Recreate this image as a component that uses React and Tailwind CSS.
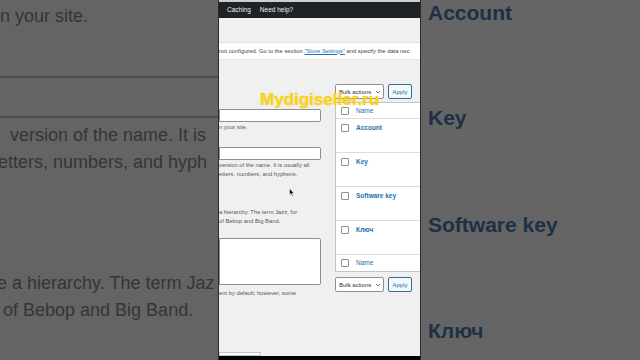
import React from 'react';

const font = { fontFamily: '"Liberation Sans", Arial, sans-serif' };

function Check() {
    return <span className="inline-block w-[8px] h-[8px] border border-[#8c8f94] bg-white rounded-[1px] shrink-0" />;
}

function BulkBar() {
    return (
        <div className="flex items-center gap-[4px]">
            <div className="w-[49px] h-[15px] bg-white border border-[#8c8f94] rounded-[2px] flex items-center justify-between pl-[3px] pr-[2px] text-[6px] leading-none whitespace-nowrap text-[#2c3338]">
                <span>Bulk actions</span>
                <svg width="6" height="4" viewBox="0 0 6 4"><path d="M1 1l2 2 2-2" stroke="#50575e" fill="none" strokeWidth="0.8" /></svg>
            </div>
            <div className="w-[24px] h-[15px] bg-[#f6f7f7] border border-[#2271b1] rounded-[2px] flex items-center justify-center text-[6px] leading-none text-[#2271b1]">
                Apply
            </div>
        </div>
    );
}

function Row({ label, head }) {
    return (
        <div className={`flex gap-[7px] px-[5px] border-b border-[#dcdcde] bg-white ${head ? 'h-[16px] items-center' : 'h-[34px] pt-[5px] items-start'}`}>
            <Check />
            <span className={`text-[6.5px] leading-[8px] text-[#2271b1] whitespace-nowrap ${head ? '' : 'font-bold'}`}>{label}</span>
        </div>
    );
}

export default function App() {
    return (
        <div className="w-[640px] h-[360px] flex overflow-hidden bg-[#646464]" style={font}>
            {/* Left blurred side */}
            <div className="w-[218px] h-full bg-[#646464] text-[#353535] text-[18px] leading-none relative overflow-hidden">
                <div className="absolute left-0 top-[7px] whitespace-nowrap">n your site.</div>
                <div className="absolute left-0 top-[76px] w-full h-[42px] border-y-2 border-[#4c4c4c]" />
                <div className="absolute left-[10px] top-[126px] whitespace-nowrap">version of the name. It is</div>
                <div className="absolute -left-[2px] top-[153px] whitespace-nowrap">etters, numbers, and hyph</div>
                <div className="absolute -left-[3px] top-[274px] whitespace-nowrap">e a hierarchy. The term Jaz</div>
                <div className="absolute left-[3px] top-[301px] whitespace-nowrap">of Bebop and Big Band.</div>
            </div>

            {/* Middle screen */}
            <div className="w-[203px] h-full bg-[#f0f0f1] flex flex-col relative overflow-hidden border-x border-[#2a2a2a]">
                <div className="h-[2px] bg-[#cfcfcf]" />
                <div className="h-[16px] bg-[#1d2327] flex items-center gap-[9px] pl-[8px] text-[6.5px] text-[#f0f0f1]">
                    <span>Caching</span>
                    <span>Need help?</span>
                </div>
                <div className="h-[24px]" />
                <div className="h-[18px] bg-white border-y border-[#e2e2e2] flex items-center overflow-hidden whitespace-nowrap text-[5.8px] text-[#3c434a]">
                    <span>not configured. Go to the section <span className="text-[#2271b1] underline">"Store Settings"</span> and specify the data nec</span>
                </div>
                <div className="flex mt-[24px]">
                    {/* Left form */}
                    <div className="w-[102px] flex flex-col overflow-hidden text-[5.8px] text-[#50575e] leading-[9px]">
                        <div className="h-[13px] mt-[25px] bg-white border border-[#8c8f94] rounded-r-[2px]" />
                        <div className="mt-[1px] whitespace-nowrap">n your site.</div>
                        <div className="h-[13px] mt-[15px] bg-white border border-[#8c8f94] rounded-r-[2px]" />
                        <div className="mt-[1px] whitespace-nowrap">version of the name. It is usually all</div>
                        <div className="whitespace-nowrap">etters, numbers, and hyphens.</div>
                        <div className="mt-[29px] whitespace-nowrap">a hierarchy. The term Jazz, for</div>
                        <div className="whitespace-nowrap">of Bebop and Big Band.</div>
                        <div className="h-[47px] mt-[12px] bg-white border border-[#8c8f94] rounded-r-[2px]" />
                        <div className="mt-[4px] whitespace-nowrap">ent by default; however, some</div>
                    </div>
                    {/* Table column */}
                    <div className="ml-[14px] flex-1 flex flex-col">
                        <BulkBar />
                        <div className="mt-[3px] border border-r-0 border-[#c3c4c7] bg-white">
                            <Row label="Name" head />
                            <Row label="Account" />
                            <Row label="Key" />
                            <Row label="Software key" />
                            <Row label="Ключ" />
                            <div className="h-[16px] flex items-center gap-[7px] px-[5px] bg-white">
                                <Check />
                                <span className="text-[6.5px] text-[#2271b1]">Name</span>
                            </div>
                        </div>
                        <div className="mt-[5px]"><BulkBar /></div>
                    </div>
                </div>
                <div className="flex-1" />
                <div className="h-[4px] w-[42px] bg-white border border-[#c3c4c7]" />
                <div className="h-[4px] bg-black" />

                {/* Watermark */}
                <div className="absolute left-[41px] top-[90px] text-[17px] leading-[20px] font-bold text-[#f5d21f] whitespace-nowrap" style={{ textShadow: '0 0 2px rgba(255,200,0,0.6)' }}>
                    Mydigiseller.ru
                </div>
                {/* Mouse pointer */}
                <svg className="absolute left-[70px] top-[188px]" width="6" height="9" viewBox="0 0 6 9">
                    <path d="M0.5 0.5 L0.5 7 L2 5.6 L3.2 8.3 L4.2 7.9 L3 5.2 L5 5.2 Z" fill="#111" stroke="#fff" strokeWidth="0.5" />
                </svg>
            </div>

            {/* Right blurred side */}
            <div className="flex-1 h-full bg-[#656565] relative overflow-hidden text-[#1d3045] text-[21px] font-bold leading-none">
                <div className="absolute left-[7px] top-[2px]">Account</div>
                <div className="absolute left-0 top-[96px] w-full h-px bg-[#6a6a6a]" />
                <div className="absolute left-[7px] top-[107px]">Key</div>
                <div className="absolute left-[7px] top-[214px]">Software key</div>
                <div className="absolute left-0 top-[302px] w-full h-px bg-[#6a6a6a]" />
                <div className="absolute left-[7px] top-[320px]">Ключ</div>
            </div>
        </div>
    );
}
